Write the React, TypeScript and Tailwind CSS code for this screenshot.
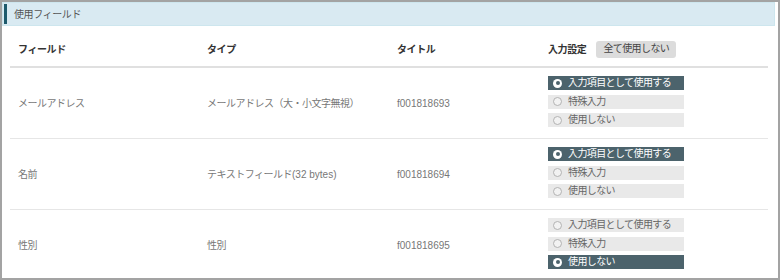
import React from "react";

type Choice = "use" | "special" | "none";

const rows: { field: string; type: string; typeSuffix?: string; title: string; value: Choice }[] = [
  { field: "メールアドレス", type: "メールアドレス（大・小文字無視）", title: "f001818693", value: "use" },
  { field: "名前", type: "テキストフィールド", typeSuffix: "(32 bytes)", title: "f001818694", value: "use" },
  { field: "性別", type: "性別", title: "f001818695", value: "none" },
];

const options: { key: Choice; label: string }[] = [
  { key: "use", label: "入力項目として使用する" },
  { key: "special", label: "特殊入力" },
  { key: "none", label: "使用しない" },
];

const RadioItem: React.FC<{ label: string; checked: boolean }> = ({ label, checked }) => (
  <div
    className={
      checked
        ? "flex items-center h-[14px] w-[136px] bg-[#4c636c] text-white"
        : "flex items-center h-[14px] w-[136px] bg-[#e9e9e9] text-[#666]"
    }
  >
    {checked ? (
      <span className="ml-[5px] mr-[6px] flex items-center justify-center w-[9px] h-[9px] rounded-full bg-white">
        <span className="w-[4px] h-[4px] rounded-full bg-[#4c636c]" />
      </span>
    ) : (
      <span className="ml-[5px] mr-[6px] w-[9px] h-[9px] rounded-full border border-[#b3b3b3] bg-[#f2f2f2]" />
    )}
    <span className="leading-none tracking-[-0.6px]">{label}</span>
  </div>
);

export default function App() {
  return (
    <div
      className="w-[780px] h-[280px] overflow-hidden border-2 border-[#a3a3a3] bg-white text-[10px]"
      style={{ fontFamily: '"Liberation Sans", "Noto Sans CJK JP", sans-serif' }}
    >
      {/* section title */}
      <div className="mr-[3px] h-[24px] flex items-center bg-[#d9eaf2] border border-[#cde6ee]">
        <span className="ml-px w-[3px] h-[20px] bg-[#1d5a6c]" />
        <span className="ml-[7px] text-[#555] tracking-[-0.4px]">使用フィールド</span>
      </div>

      <div className="ml-[8px] mr-[10px]">
        {/* table head */}
        <div className="grid grid-cols-[189px_190px_151px_1fr] h-[42px] pt-[6px] items-center border-b-2 border-[#e0e0e0] font-bold text-[#333] tracking-[-0.4px]">
          <div className="pl-[8px]">フィールド</div>
          <div className="pl-[8px]">タイプ</div>
          <div className="pl-[8px]">タイトル</div>
          <div className="pl-[8px] flex items-center">
            <span>入力設定</span>
            <button className="ml-[10px] h-[17px] px-[7px] rounded-[3px] bg-[#dcdcdc] font-normal text-[#444] leading-none tracking-[-0.6px]">
              全て使用しない
            </button>
          </div>
        </div>

        {/* rows */}
        {rows.map((r) => (
          <div
            key={r.title}
            className="grid grid-cols-[189px_190px_151px_1fr] h-[71px] items-center border-b border-[#e6e6e6] text-[#777]"
          >
            <div className="pl-[8px] tracking-[-0.5px]">{r.field}</div>
            <div className="pl-[8px]">
              <span className="tracking-[-0.5px]">{r.type}</span>
              {r.typeSuffix}
            </div>
            <div className="pl-[8px]">{r.title}</div>
            <div className="pl-[8px] self-start pt-[8px] flex flex-col gap-[4.5px]">
              {options.map((o) => (
                <RadioItem key={o.key} label={o.label} checked={o.key === r.value} />
              ))}
            </div>
          </div>
        ))}
      </div>
    </div>
  );
}
